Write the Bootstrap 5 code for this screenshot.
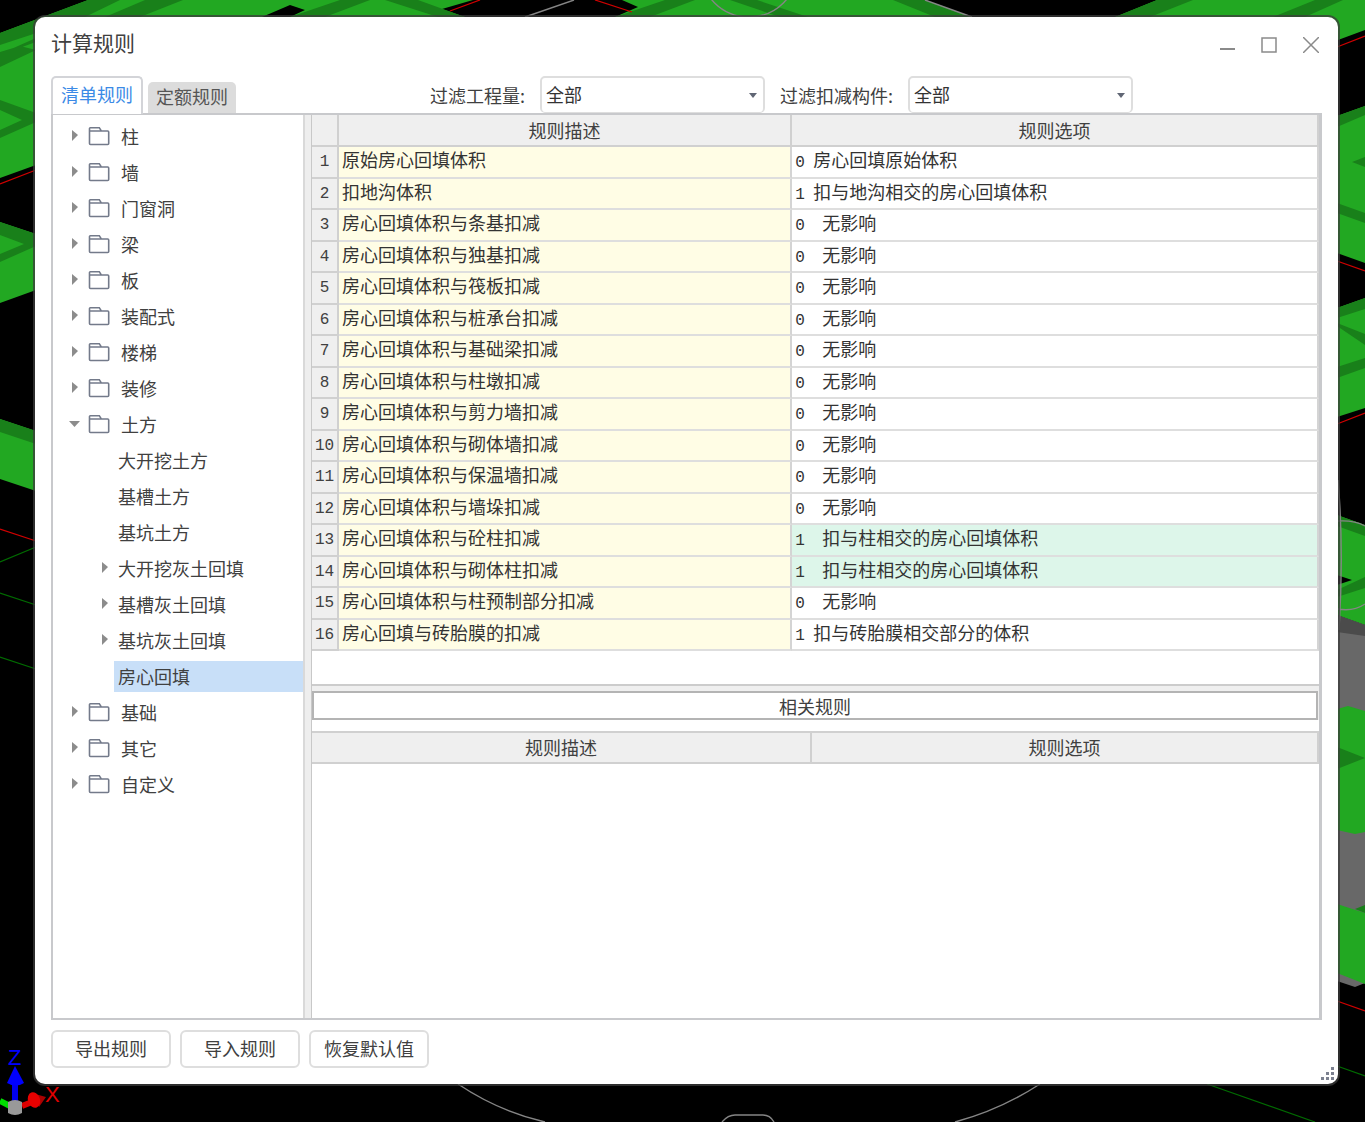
<!DOCTYPE html>
<html lang="zh-CN">
<head>
<meta charset="utf-8">
<meta name="viewport" content="width=device-width, initial-scale=1">
<title>计算规则</title>
<link href="https://cdn.jsdelivr.net/npm/bootstrap@5.3.0/dist/css/bootstrap.min.css" rel="stylesheet">
<style>
  body { font-family: "Noto Sans CJK SC", sans-serif; font-size: 18px; line-height: 24px; color: #404040; background: #000; }
  .stage { padding: 17px 27px 38px 35px; }
  .scene { z-index: 0; pointer-events: none; }
  .dialog-box { z-index: 1; background: #fff; border-radius: 10px; padding: 0 16px 16px; box-shadow: 0 0 0 2px rgba(60, 60, 60, .75); }
  .title-bar { height: 59px; padding-bottom: 9px; }
  .title-bar h1 { font-size: 21px; line-height: 28px; font-weight: 400; }
  .win-btn { width: 42px; height: 32px; color: #8a8a8a; }
  .win-tools { margin-right: -10px; }
  .tool-row { height: 37px; }
  .rule-tab { font-size: 18px; line-height: 24px; padding: 0 8px 4px; border: 0; border-radius: 5px 5px 0 0; background: #dcdcdc; color: #555; height: 31px; }
  .rule-tab.on { position: relative; z-index: 2; height: 38px; margin-bottom: -1px; padding: 0 8px 4px; background: #fff; color: #3b8ae6; border: 2px solid #d3d4d8; border-bottom: 0; }
  .tab-set { gap: 5px; margin-right: 192px; width: 187px; }
  .filter-set { gap: 15px; }
  .filter-set label { white-space: nowrap; }
  .pick { width: 225px; height: 37px; padding: 0 24px 2px 4px; font-size: 18px; line-height: 24px; color: #333; border: 2px solid #dedede; border-bottom-width: 1px; border-radius: 5px;
    background-image: url("data:image/svg+xml,%3Csvg xmlns='http://www.w3.org/2000/svg' viewBox='0 0 8 5'%3E%3Cpath d='M0 0h8L4 5z' fill='%23606674'/%3E%3C/svg%3E"); background-size: 8px 5px; background-position: right 6px center; }
  .frame { border: 2px solid #c8c9cc; border-right-width: 3px; }
  .tree { width: 250px; padding-top: 4px; }
  .tree-item { height: 36px; padding: 0 0 2px 16px; border: 0; background: none; color: #404040; text-align: left; }
  .tree-item .arrow { width: 12px; height: 12px; color: #8c8c8c; margin-right: 7px; }
  .tree-item .folder { width: 22px; height: 20px; margin-right: 11px; }
  .tree-child { padding-left: 46px; }
  .tree-child .arrow { margin-right: 3px; }
  .tree-child span { flex: 1; height: 31px; line-height: 31px; padding-left: 4px; }
  .tree-child.chosen span { background: #c8dff8; }
  .split-v { width: 9px; background: #eee; border-left: 2px solid #d9d9d9; border-right: 1px solid #c8c8c8; }
  .grid-table { width: 100%; table-layout: fixed; border-collapse: separate; border-spacing: 0; color: #333; }
  .grid-table th { height: 32px; padding: 0; background: #efefef; font-weight: 400; text-align: center; color: #404040; border-right: 2px solid #d0d0d0; border-bottom: 2px solid #d0d0d0; }
  .grid-table td, .grid-table tbody th { height: 32px; padding: 0 3px; border-right: 2px solid #d4d4d4; border-bottom: 2px solid #dedede; line-height: 24px; white-space: pre; vertical-align: top; }
  .grid-table tbody th { font-family: "Liberation Mono", monospace; font-size: 16px; line-height: 27px; padding: 2px 3px 0; border-color: #d0d0d0; }
  .grid-table tbody tr:nth-child(even) > * { height: 31px; }
  .grid-table td.desc { background: #fffde5; }
  .grid-table tr.hit td.opt { background: #ddf6ea; }
  .grid-table .code { display: inline-block; font-family: "Liberation Mono", monospace; font-size: 16px; width: 18px; }
  .grid-table .deep { width: 27px; }
  .rules-pane { height: 571px; border-bottom: 2px solid #ccc; }
  .related-title { background: #fff; border: 2px solid #b4b4b4; height: 29px; line-height: 26px; margin-right: 1px; }
  .related-wrap { background: #efefef; padding-top: 5px; }
  .lower { padding-top: 11px; }
  .lower .grid-table th { border-top: 2px solid #d0d0d0; height: 33px; padding-bottom: 2px; }
  .foot { gap: 9px; padding-top: 10px; }
  .act { width: 120px; height: 38px; padding: 0 0 2px; font-size: 18px; line-height: 24px; color: #404040; background: #fff; border: 2px solid #dedede; border-radius: 6px; }
  .grip { right: 3px; bottom: 4px; }
</style>
<script src="https://cdn.jsdelivr.net/npm/bootstrap@5.3.0/dist/js/bootstrap.bundle.min.js"></script>
</head>
<body>
<svg class="d-none" aria-hidden="true">
  <symbol id="right" viewBox="0 0 12 12"><path d="M3 0l6 5-6 6z" fill="currentColor"/></symbol>
  <symbol id="down" viewBox="0 0 12 12"><path d="M0 3h11L5.500 9z" fill="currentColor"/></symbol>
  <symbol id="folder" viewBox="0 0 22 20"><path d="M1.500 5V2.500q0-.8.800-.8h9l2 3.300h6.400q1 0 1 1v11.500q0 1-1 1H2.500q-1 0-1-1V5h12" fill="none" stroke="#737a8a" stroke-width="1.600"/></symbol>
</svg>

<div class="stage position-relative min-vh-100 d-flex">
  <svg class="scene position-absolute top-0 start-0 w-100 h-100" viewBox="0 0 1365 1122" preserveAspectRatio="xMinYMin slice" aria-hidden="true">
    <g fill="#22a822">
      <path d="M0 33L88 0H473L442 9 465 17V30H36V165L0 178z"/>
      <path d="M622 0H925L972 17V25H615V17L638 7z"/>
      <path d="M1157 0H1365V30L1338 40V30H1115V17z"/>
      <path d="M0 222l36 12v56L0 303zM0 419l36 12v60L0 479z"/>
      <path d="M1337 116l28-10v157l-28-10zM1337 308l28-10v110l-28 9zM1337 515l28 10v100l-28-10z"/>
    </g>
    <path d="M1337 615l28 10v358l-10 4-18-6z" fill="#686868"/>
    <path d="M1337 615l28 10v11l-28-4z" fill="#4b4b4b"/>
    <path d="M1337 709l11-3 17 5v121l-10 2-18-4zM1337 904l28 9v71l-28-11z" fill="#22a822"/>
    <g fill="#19801a">
      <path d="M0 33L88 0h32L85 17 0 45zM0 55L105 17 145 0h38L140 17 36 50 20 46 0 52zM0 67L36 50V38L0 54z"/>
      <path d="M0 100l36 13v9L0 138v-8l22-10L0 110z"/>
      <path d="M340 0h30l-45 17h-35zM385 0h33l47 17h-27zM665 0h30l-45 17h-35zM730 0h27l51 17h-28zM893 0h32l47 17h-37zM1157 0h36l-43 17h-35zM1315 0h28l-38 17h-32z"/>
      <path d="M0 222l36 12v12L0 262v-8l24-10-24-9zM0 419l36 12v13L0 432z"/>
      <path d="M1337 116l28-10v9l-28 12zM1352 162l13-5v10zM1337 203l28 10v10l-28-10zM1337 308l28-10v11l-28 9zM1337 323l28 11v11l-28-19zM1337 367l28-9v10l-28 10zM1337 515l28 10v11l-28-10zM1337 590l28-13v11l-28 9zM1337 747l28 11-28 11zM1355 909l10-4v8z"/>
    </g>
    <path d="M262 17l28-12 15 5-15 7v5h-28zM1337 575l15 5-15 5z" fill="#000"/>
    <path d="M0 184l36-14M0 529l36 12M480 0l-30 11M595 0l37 12M1337 47l28-11M1337 261l28 10M1337 424l28-11M1337 1001l28 10" fill="none" stroke="#d00000" stroke-width="1.300"/>
    <path d="M0 562l36-15M0 593l36 12M0 657l36 12M1337 1066l28 10M1207 1084l108 38" fill="none" stroke="#006b00" stroke-width="1.200"/>
    <g fill="none" stroke="#858585" stroke-width="1.400">
      <path d="M574 0l-49 17M925 0l47 17M458 1084q40 27 87 38M1040 1084q-40 26-85 38M722 1122q6-7 13-7h28q7 0 11 7M1338 480q6 70 1 150M1338 521q16-1 27 5M1338 609q15 3 27-5"/>
      <circle cx="749" cy="-32" r="49"/>
    </g>
    <path d="M0 1101l10 5" stroke="#0d0" stroke-width="6"/>
    <path d="M22 1106l10-4" stroke="#d00" stroke-width="6"/>
    <path d="M35 1094l11 3-7 10z" fill="#a00"/>
    <ellipse cx="34" cy="1100" rx="6" ry="8" transform="rotate(-20 34 1100)" fill="#e80000"/>
    <path d="M15 1104v-22" stroke="#00e" stroke-width="6"/>
    <path d="M7 1083l8-17 9 17q-8 5-17 0z" fill="#00f"/>
    <path d="M8 1102q7-4 14 0v11q-7 4-14 0z" fill="#999"/>
    <g font-family="Liberation Sans, sans-serif" font-size="22"><text x="8" y="1065" fill="#00f">Z</text><text x="45" y="1102" fill="#e00000">X</text></g>
  </svg>

  <main class="dialog-box position-relative d-flex flex-column flex-fill">
    <header class="title-bar d-flex align-items-center justify-content-between">
      <h1 class="m-0">计算规则</h1>
      <div class="win-tools d-flex">
        <button class="win-btn btn p-0 border-0" type="button" aria-label="最小化"><svg width="16" height="16"><path d="M1 12h15" stroke="currentColor" stroke-width="2"/></svg></button>
        <button class="win-btn btn p-0 border-0" type="button" aria-label="最大化"><svg width="16" height="16"><rect x="1" y="1" width="14" height="14" fill="none" stroke="currentColor" stroke-width="1.500"/></svg></button>
        <button class="win-btn btn p-0 border-0" type="button" aria-label="关闭"><svg width="16" height="16"><path d="M0 0l16 16M16 0L0 16" stroke="currentColor" stroke-width="1.500"/></svg></button>
      </div>
    </header>

    <div class="tool-row d-flex align-items-end">
      <div class="tab-set d-flex align-items-end" role="tablist">
        <button class="rule-tab on" type="button" role="tab" aria-selected="true">清单规则</button>
        <button class="rule-tab" type="button" role="tab" aria-selected="false">定额规则</button>
      </div>
      <div class="filter-set d-flex align-items-center">
        <label for="f1">过滤工程量:</label>
        <select id="f1" class="form-select pick"><option>全部</option></select>
        <label for="f2">过滤扣减构件:</label>
        <select id="f2" class="form-select pick"><option>全部</option></select>
      </div>
    </div>

    <div class="frame d-flex flex-fill">
      <nav class="tree d-flex flex-column flex-shrink-0">
        <button type="button" class="tree-item d-flex align-items-center"><svg class="arrow"><use href="#right"/></svg><svg class="folder"><use href="#folder"/></svg>柱</button>
        <button type="button" class="tree-item d-flex align-items-center"><svg class="arrow"><use href="#right"/></svg><svg class="folder"><use href="#folder"/></svg>墙</button>
        <button type="button" class="tree-item d-flex align-items-center"><svg class="arrow"><use href="#right"/></svg><svg class="folder"><use href="#folder"/></svg>门窗洞</button>
        <button type="button" class="tree-item d-flex align-items-center"><svg class="arrow"><use href="#right"/></svg><svg class="folder"><use href="#folder"/></svg>梁</button>
        <button type="button" class="tree-item d-flex align-items-center"><svg class="arrow"><use href="#right"/></svg><svg class="folder"><use href="#folder"/></svg>板</button>
        <button type="button" class="tree-item d-flex align-items-center"><svg class="arrow"><use href="#right"/></svg><svg class="folder"><use href="#folder"/></svg>装配式</button>
        <button type="button" class="tree-item d-flex align-items-center"><svg class="arrow"><use href="#right"/></svg><svg class="folder"><use href="#folder"/></svg>楼梯</button>
        <button type="button" class="tree-item d-flex align-items-center"><svg class="arrow"><use href="#right"/></svg><svg class="folder"><use href="#folder"/></svg>装修</button>
        <button type="button" class="tree-item d-flex align-items-center"><svg class="arrow"><use href="#down"/></svg><svg class="folder"><use href="#folder"/></svg>土方</button>
        <button type="button" class="tree-item tree-child d-flex align-items-center"><svg class="arrow"></svg><span>大开挖土方</span></button>
        <button type="button" class="tree-item tree-child d-flex align-items-center"><svg class="arrow"></svg><span>基槽土方</span></button>
        <button type="button" class="tree-item tree-child d-flex align-items-center"><svg class="arrow"></svg><span>基坑土方</span></button>
        <button type="button" class="tree-item tree-child d-flex align-items-center"><svg class="arrow"><use href="#right"/></svg><span>大开挖灰土回填</span></button>
        <button type="button" class="tree-item tree-child d-flex align-items-center"><svg class="arrow"><use href="#right"/></svg><span>基槽灰土回填</span></button>
        <button type="button" class="tree-item tree-child d-flex align-items-center"><svg class="arrow"><use href="#right"/></svg><span>基坑灰土回填</span></button>
        <button type="button" class="tree-item tree-child chosen d-flex align-items-center"><svg class="arrow"></svg><span>房心回填</span></button>
        <button type="button" class="tree-item d-flex align-items-center"><svg class="arrow"><use href="#right"/></svg><svg class="folder"><use href="#folder"/></svg>基础</button>
        <button type="button" class="tree-item d-flex align-items-center"><svg class="arrow"><use href="#right"/></svg><svg class="folder"><use href="#folder"/></svg>其它</button>
        <button type="button" class="tree-item d-flex align-items-center"><svg class="arrow"><use href="#right"/></svg><svg class="folder"><use href="#folder"/></svg>自定义</button>
      </nav>
      <div class="split-v flex-shrink-0"></div>
      <section class="flex-fill d-flex flex-column">
        <div class="rules-pane">
          <table class="grid-table">
            <colgroup><col style="width:27px"><col style="width:45%"><col></colgroup>
            <thead><tr><th></th><th>规则描述</th><th>规则选项</th></tr></thead>
            <tbody>
              <tr><th>1</th><td class="desc">原始房心回填体积</td><td class="opt"><span class="code">0</span>房心回填原始体积</td></tr>
              <tr><th>2</th><td class="desc">扣地沟体积</td><td class="opt"><span class="code">1</span>扣与地沟相交的房心回填体积</td></tr>
              <tr><th>3</th><td class="desc">房心回填体积与条基扣减</td><td class="opt"><span class="code deep">0</span>无影响</td></tr>
              <tr><th>4</th><td class="desc">房心回填体积与独基扣减</td><td class="opt"><span class="code deep">0</span>无影响</td></tr>
              <tr><th>5</th><td class="desc">房心回填体积与筏板扣减</td><td class="opt"><span class="code deep">0</span>无影响</td></tr>
              <tr><th>6</th><td class="desc">房心回填体积与桩承台扣减</td><td class="opt"><span class="code deep">0</span>无影响</td></tr>
              <tr><th>7</th><td class="desc">房心回填体积与基础梁扣减</td><td class="opt"><span class="code deep">0</span>无影响</td></tr>
              <tr><th>8</th><td class="desc">房心回填体积与柱墩扣减</td><td class="opt"><span class="code deep">0</span>无影响</td></tr>
              <tr><th>9</th><td class="desc">房心回填体积与剪力墙扣减</td><td class="opt"><span class="code deep">0</span>无影响</td></tr>
              <tr><th>10</th><td class="desc">房心回填体积与砌体墙扣减</td><td class="opt"><span class="code deep">0</span>无影响</td></tr>
              <tr><th>11</th><td class="desc">房心回填体积与保温墙扣减</td><td class="opt"><span class="code deep">0</span>无影响</td></tr>
              <tr><th>12</th><td class="desc">房心回填体积与墙垛扣减</td><td class="opt"><span class="code deep">0</span>无影响</td></tr>
              <tr class="hit"><th>13</th><td class="desc">房心回填体积与砼柱扣减</td><td class="opt"><span class="code deep">1</span>扣与柱相交的房心回填体积</td></tr>
              <tr class="hit"><th>14</th><td class="desc">房心回填体积与砌体柱扣减</td><td class="opt"><span class="code deep">1</span>扣与柱相交的房心回填体积</td></tr>
              <tr><th>15</th><td class="desc">房心回填体积与柱预制部分扣减</td><td class="opt"><span class="code deep">0</span>无影响</td></tr>
              <tr><th>16</th><td class="desc">房心回填与砖胎膜的扣减</td><td class="opt"><span class="code">1</span>扣与砖胎膜相交部分的体积</td></tr>
            </tbody>
          </table>
        </div>
        <div class="related-wrap"><div class="related-title text-center">相关规则</div></div>
        <div class="lower">
          <table class="grid-table">
            <colgroup><col style="width:500px"><col></colgroup>
            <thead><tr><th>规则描述</th><th>规则选项</th></tr></thead>
          </table>
        </div>
      </section>
    </div>

    <footer class="foot d-flex">
      <button class="act btn" type="button">导出规则</button>
      <button class="act btn" type="button">导入规则</button>
      <button class="act btn" type="button">恢复默认值</button>
    </footer>
    <svg class="grip position-absolute" width="14" height="13" aria-hidden="true"><path d="M10 0h3v3h-3zM5 5h3v3h-3zM10 5h3v3h-3zM0 10h3v3H0zM5 10h3v3h-3zM10 10h3v3h-3z" fill="#7c8190"/></svg>
  </main>
</div>
</body>
</html>
